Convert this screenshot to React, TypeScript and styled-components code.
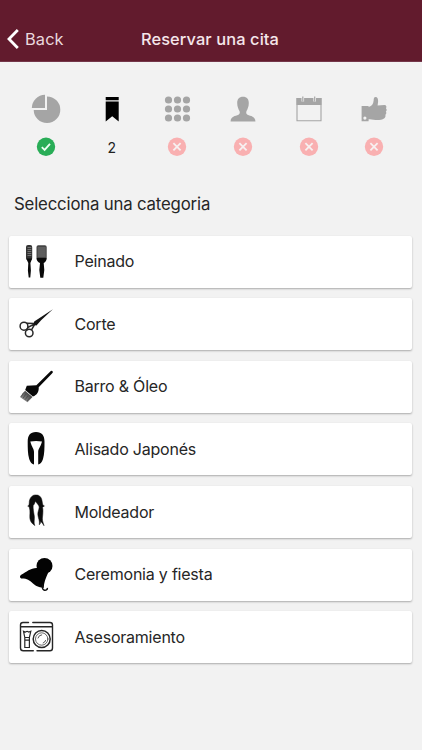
import React from "react";
import styled, { createGlobalStyle } from "styled-components";

const GlobalStyle = createGlobalStyle`
  * { box-sizing: border-box; }
  body { margin: 0; background: #f2f2f2; }
`;

const Screen = styled.div`
  height: 750px;
  display: flex;
  flex-direction: column;
  overflow: hidden;
  background: #f2f2f2;
  color: #262626;
  font-family: Inter, "Liberation Sans", sans-serif;
`;

const Header = styled.header`
  height: 62px;
  flex: none;
  display: grid;
  grid-template-columns: 100px 1fr 102px;
  padding-top: 17px;
  align-items: center;
  background: #621b2d;
  border-bottom: 1px solid #74374a;
`;

const BackButton = styled.button`
  display: flex;
  align-items: center;
  gap: 6px;
  height: 44px;
  padding: 0 0 0 7px;
  border: 0;
  background: none;
  color: #ead9de;
  font: 400 16.4px Inter, sans-serif;
  letter-spacing: 0.1px;
`;

const Title = styled.h1`
  margin: 0;
  text-align: center;
  white-space: nowrap;
  font-size: 16.4px;
  font-weight: 500;
  letter-spacing: 0.1px;
  color: #f5e6ea;
`;

const Steps = styled.nav`
  flex: none;
  display: grid;
  grid-template-columns: repeat(6, 65.6px);
  padding: 32px 0 0 13.5px;
`;

const Step = styled.div<{ $active?: boolean }>`
  display: flex;
  flex-direction: column;
  align-items: center;
  gap: 13px;
  color: ${(p) => (p.$active ? "#000" : "#a5a5a5")};
`;

const StepState = styled.div`
  height: 20px;
  display: flex;
  align-items: center;
  color: #222;
  font-size: 14px;
`;

const Heading = styled.h2`
  flex: none;
  margin: 35px 0 0 14px;
  height: 24px;
  line-height: 24px;
  font-size: 16.8px;
  font-weight: 400;
  letter-spacing: -0.18px;
`;

const List = styled.div`
  display: flex;
  flex-direction: column;
  gap: 10.6px;
  padding: 19.7px 10px 0 9px;
`;

const Card = styled.button`
  height: 52px;
  flex: none;
  display: flex;
  align-items: center;
  gap: 18.5px;
  padding: 0 0 0 7px;
  border: 0;
  border-radius: 2px;
  background: #fff;
  box-shadow: 0 1px 2px rgba(0, 0, 0, 0.3);
  color: #262626;
  font: 400 16px Inter, sans-serif;
  letter-spacing: -0.22px;
  text-align: left;
`;

const Label = styled.span`
  position: relative;
  top: -0.5px;
`;

const stepIcons = [
  <svg width="30" height="30" viewBox="0 0 30 30" fill="currentColor">
    <path d="M14 .8V14H.8A13.5 13.5 0 0 1 14 .8Z" />
    <path d="M16 2.4A13.3 13.3 0 1 1 2.7 15.9H16Z" />
  </svg>,
  <svg width="30" height="30" viewBox="0 0 30 30" fill="currentColor">
    <path d="M8.7 3h13v3.2h-13zM8.7 7.4h13v20.1l-6.5-5.3-6.5 5.3z" />
  </svg>,
  <svg width="30" height="30" viewBox="0 0 30 30" fill="currentColor">
    {[6, 15, 24].map((y) => [6, 15, 24].map((x) => <circle key={`${x}-${y}`} cx={x + 0.5} cy={y} r="3.6" />))}
  </svg>,
  <svg width="30" height="30" viewBox="0 0 30 30" fill="currentColor">
    <path d="M15 2.7c4 0 5.8 2.5 5.8 6.2 0 4-1.4 6.2-2.3 8.2-.6 1.6-.3 2.9 1 3.7 3.2 1.4 7.9 1.5 7.9 6.7H2.6c0-5.2 4.7-5.3 7.9-6.7 1.3-.8 1.6-2.1 1-3.7-.9-2-2.3-4.2-2.3-8.2 0-3.7 1.8-6.2 5.8-6.2Z" />
  </svg>,
  <svg width="30" height="30" viewBox="0 0 30 30">
    <path d="M3 4.5h24v22.3H3z" fill="none" stroke="currentColor" strokeWidth="1.1" />
    <path d="M2.5 4h25v7h-25z" fill="currentColor" />
    <path d="M8.8 1.5v6M20.7 1.5v6" stroke="#f2f2f2" strokeWidth="2.6" />
    <path d="M8.8 2.5v5M20.7 2.5v5" stroke="currentColor" strokeWidth="1.2" />
  </svg>,
  <svg width="30" height="30" viewBox="0 0 30 30" fill="currentColor">
    <path fillRule="evenodd" d="M2.6 12h7v15.3h-7zM5.9 22.5a1.6 1.6 0 1 0 0 3.2 1.6 1.6 0 0 0 0-3.2Z" />
    <path d="M9 13.2c3.6-1 5.4-3 5.6-6.5.1-2.8.6-3.8 2-3.8 1.8 0 2.7 2 2.5 4.8l-.5 3.8 6.8-.5c2 0 2.6 2 1.5 3.2 1.1 1 1 2.6-.1 3.3.9 1.2.6 2.7-.5 3.3.6 1.4.1 3-1.3 3.6-1.6 1.2-4.7 1.8-8.5 1.6-3 0-4.8-.7-7.5-.7Z" />
  </svg>,
];

const Mark = ({ done }: { done?: boolean }) => (
  <svg width="20" height="20" viewBox="0 0 20 20" fill="none">
    <circle cx="10" cy="9.7" r="9.2" fill={done ? "#29ad57" : "#f9b0b1"} />
    <path
      d={done ? "m5.8 10.2 2.8 2.7 5.4-6.1" : "m6.4 6.1 7.2 7.2m0-7.2-7.2 7.2"}
      stroke={done ? "#eefff3" : "#f7f1f1"}
      strokeWidth="1.8"
    />
  </svg>
);

const Drawing = ({ children }: { children: React.ReactNode }) => (
  <svg width="40" height="40" viewBox="0 0 40 40">{children}</svg>
);

const categories = [
  {
    label: "Peinado",
    icon: (
      <Drawing>
        <rect x="10" y="3" width="6.2" height="15" rx="2" fill="#333" />
        <rect x="20.5" y="3.3" width="10.2" height="13.7" rx="1.8" fill="#444" />
        <path d="M11.5 5.5h3.8M11.5 7.5h3.8M11.5 9.5h3.8M11.5 11.5h3.8M11.5 13.5h3.8M21.7 6h8M21.7 8h8M21.7 10h8M21.7 12h8M21.7 14h8" stroke="#858585" strokeWidth=".8" />
        <path d="M10.2 16.5h6l-1.8 4.4.5 7.5-.6 7.1h-1.6l-.8-7 .4-7.6ZM20.5 16h10.2c0 2.4-1.2 4.1-3 5l.6 7-1 7.7h-3l-1-7.7.7-7c-2.2-.9-3.5-2.6-3.5-5Z" fill="#090909" />
      </Drawing>
    ),
  },
  {
    label: "Corte",
    icon: (
      <Drawing>
        <g fill="none" stroke="#292929" strokeWidth="1.5">
          <ellipse cx="8" cy="22.2" rx="3.9" ry="4" />
          <ellipse cx="13.2" cy="29" rx="3.8" ry="3.7" />
          <path d="m10.5 19.3 7.8.2M15.5 25.9l3-5.2M11.7 23.5l6.6-3.4M11.7 24l-1.2 2.6" />
        </g>
        <path d="M36.9 5.2 18.2 17.4l-.9 3.6 3.2.6 4.6-5.3Z" fill="#151515" />
      </Drawing>
    ),
  },
  {
    label: "Barro & Óleo",
    icon: (
      <Drawing>
        <defs>
          <linearGradient id="bristles" x1="1" y1="0" x2="0" y2="1">
            <stop stopColor="#222" /><stop offset="1" stopColor="#aaa" />
          </linearGradient>
        </defs>
        <path d="m9 23.8 7.5 6.3-5 5.1-7.6-5.2Z" fill="url(#bristles)" />
        <path d="m7.5 25.5-2.2 4.2M9.7 27.2l-2.6 4M11.9 29l-2.8 3.7M14 30.5l-3 3.5" stroke="#444" strokeWidth=".7" />
        <path d="m9.2 23 1.6-4.2 9.6-.5L34.3 4.5c.7-1 2.2-.8 2.5.3.2.7-.3 1.3-.8 1.7L22.7 20.2c.4 4.4-1.7 7.9-5.8 9.3Z" fill="#080808" />
      </Drawing>
    ),
  },
  {
    label: "Alisado Japonés",
    icon: (
      <Drawing>
        <path d="M20 3C26 3 28.5 6.8 28.5 12.5C28.5 19 28.5 25 27 30C26 33.5 24 35.3 22.2 35.6V23C22.2 19.8 24.4 18.5 26 12.6C21.8 11.7 18.2 11.7 14.3 12.6C15.9 18.5 18 19.8 18 23V35.6C16.2 35.3 14.2 33.5 13.2 30C11.7 25 11.7 19 11.7 12.5C11.7 6.8 14 3 20 3Z" fill="#080808" />
      </Drawing>
    ),
  },
  {
    label: "Moldeador",
    icon: (
      <Drawing>
        <path d="M20.2 3C17 2.6 14.6 4.8 13.6 8C12.9 10 13.6 12 12.7 13.4L11.7 14.1L13.1 14.7C14.8 19.5 13.3 23.5 14 27C14.5 30.2 16.4 31.7 18.8 33.6C17.4 30 18.8 27.8 18.3 24C17.6 20 16.9 16.5 17.2 13.5C18.5 12.2 18.9 10.7 19.3 9.2C21 11.5 22.8 13 23.2 15C23 18.1 21.5 20 21.9 23C22.2 26.5 24 28.5 23.3 32.8C24.5 31.7 24.8 30.5 24.3 29C26 30.5 26.9 32 28 33.7C27.4 31 26.2 29.2 26.4 26C26.8 22.5 27.3 18.3 26.5 15.2L28.4 14L27 13.3C26 10.3 26.3 7.5 24.7 5.2C23.5 3.5 22 3 20.2 3Z" fill="#0b0b0b" stroke="#0b0b0b" strokeWidth=".5" strokeLinejoin="round" />
      </Drawing>
    ),
  },
  {
    label: "Ceremonia y fiesta",
    icon: (
      <Drawing>
        <circle cx="28.5" cy="10.9" r="8" fill="#030303" />
        <path d="M21.1 13C15 12.7 10.5 16.8 5.2 19.8C3.5 20.8 3.6 23 5.2 23.6C10.8 23.4 13.2 25 17 28.6C19.5 31 22 32.3 27.7 33C28 27.5 29.5 23.5 32 18Z" fill="#030303" />
        <path d="M27.2 29.5C25.9 31.8 26 34 28 35C29.8 35.7 31.6 34.7 31.4 32.8" fill="none" stroke="#111" strokeWidth="1.5" />
      </Drawing>
    ),
  },
  {
    label: "Asesoramiento",
    icon: (
      <Drawing>
        <g fill="none" stroke="#262626" strokeWidth="1.4" strokeLinecap="round">
          <path d="M12.5 5.5H7Q4.5 5.5 4.5 8v23q0 2.8 2.8 2.8h10M21 33.8h13q2.5 0 2.5-2.8V8q0-2.5-2.5-2.5H16.8M4.5 9.7h32" />
          <path d="m7.5 14.3 1.8.8 1.8-.8 1.8.8 1.9-.8-1.4 6.2H8.8ZM8.8 20.5v10h4.6v-10M8.8 23.2h4.6" strokeWidth="1.2" />
          <circle cx="25.7" cy="22" r="8.5" strokeWidth="1.5" /><circle cx="25.7" cy="22" r="6.2" strokeWidth=".7" />
          <path d="M22 21q.8-3 3.7-3.2M27.2 26q2-.7 2.4-2.5" strokeWidth=".8" />
        </g>
      </Drawing>
    ),
  },
];

export default function App() {
  return (
    <Screen>
      <GlobalStyle />
      <Header>
        <BackButton>
          <svg width="12" height="22" viewBox="0 0 12 22" fill="none" stroke="#fff" strokeWidth="2.8">
            <path d="M10.8 2 2 11l8.8 9" />
          </svg>
          Back
        </BackButton>
        <Title>Reservar una cita</Title>
      </Header>
      <Steps>
        {stepIcons.map((icon, i) => (
          <Step key={i} $active={i === 1}>
            {icon}
            <StepState>{i === 1 ? "2" : <Mark done={i === 0} />}</StepState>
          </Step>
        ))}
      </Steps>
      <Heading>Selecciona una categoria</Heading>
      <List>
        {categories.map(({ label, icon }) => (
          <Card key={label}>
            {icon}
            <Label>{label}</Label>
          </Card>
        ))}
      </List>
    </Screen>
  );
}
